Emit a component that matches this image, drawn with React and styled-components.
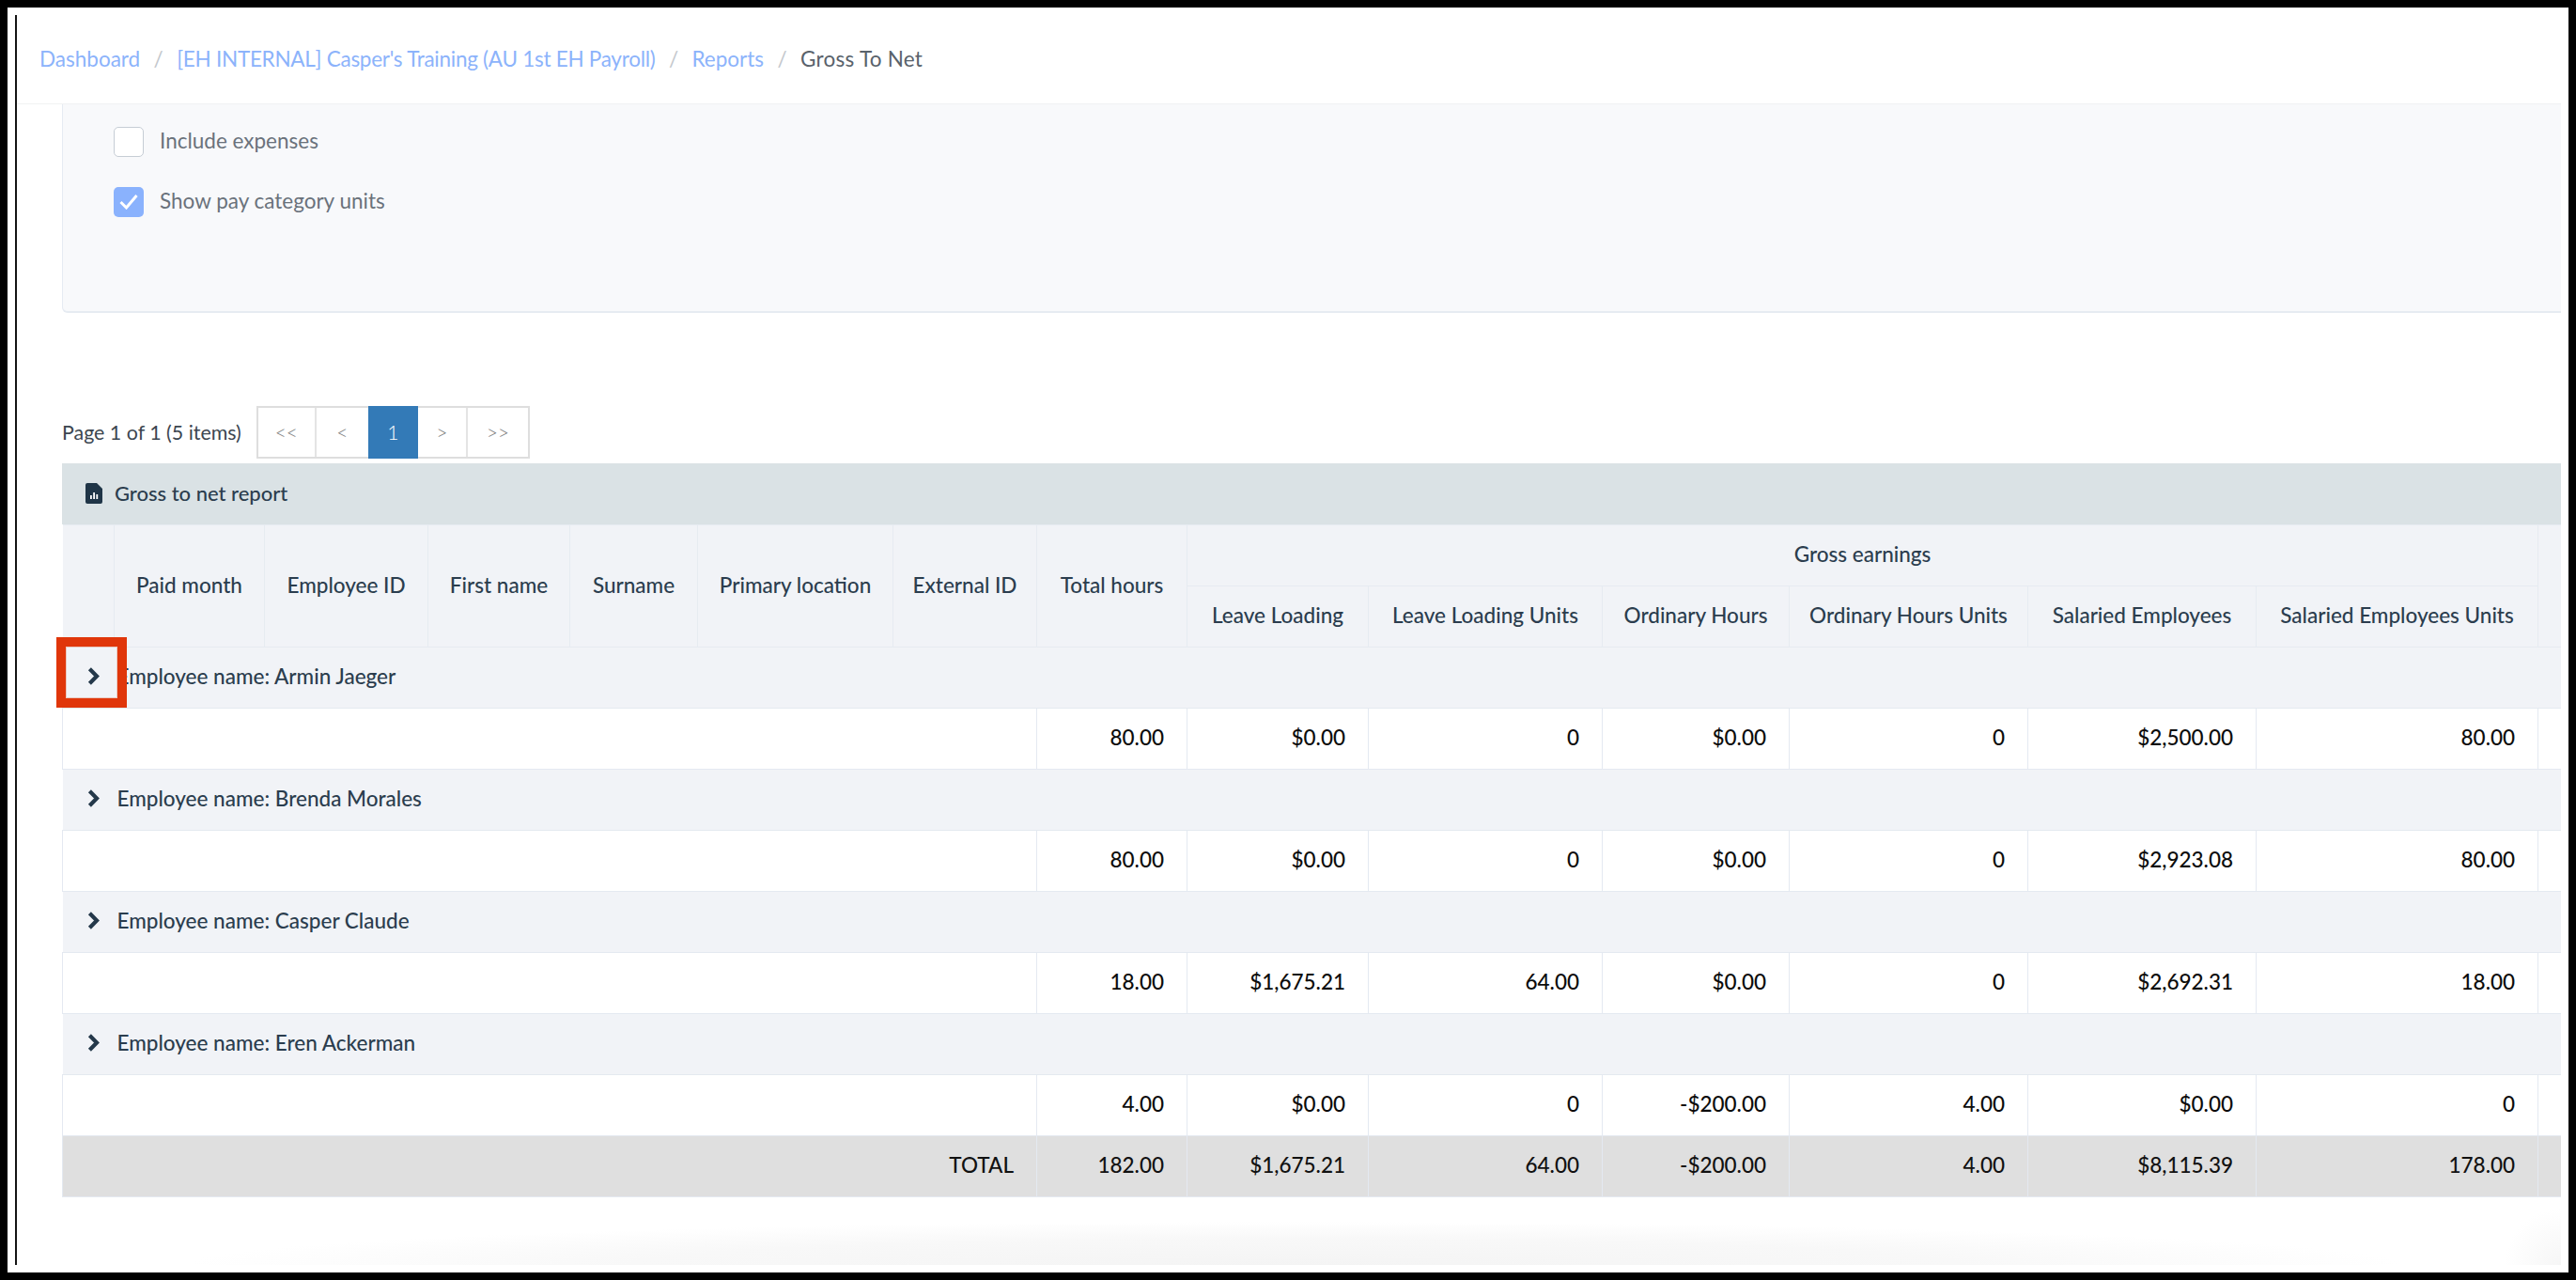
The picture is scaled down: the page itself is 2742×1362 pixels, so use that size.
import React from "react";
import styled, { createGlobalStyle } from "styled-components";

const Global = createGlobalStyle`
  html, body { margin: 0; padding: 0; background: #000; }
  * { box-sizing: border-box; }
  body { font-family: Lato, "Liberation Sans", sans-serif; }
`;

const Frame = styled.div`
  width: 2742px;
  height: 1362px;
  padding: 8px;
  background: #000;
  overflow: hidden;
`;
const Screen = styled.div`
  height: 100%;
  background: #fff;
  padding: 8px;
`;
const Viewport = styled.div`
  position: relative;
  height: 100%;
  border-left: 2px solid #141414;
  overflow: hidden;
  display: flex;
  flex-direction: column;
`;
const ScrollThumb = styled.div`
  position: absolute;
  left: -2px;
  top: 325px;
  width: 2px;
  height: 75px;
  background: #4c4c4c;
`;
const Breadcrumbs = styled.nav`
  flex: none;
  height: 95px;
  padding: 0 0 2px 24px;
  display: flex;
  align-items: center;
  font-size: 22.5px;
  border-bottom: 1px solid #f1f2f3;
`;
const Crumb = styled.span`
  color: ${(p) => (p.$current ? "#59626b" : "#8cb3fb")};
  letter-spacing: ${(p) => p.$track || 0}px;
`;
const Sep = styled.span`
  color: #c4c8cd;
  width: 39px;
  text-align: center;
`;
const Body = styled.main`
  flex: 1;
  padding-left: 48px;
  display: flex;
  flex-direction: column;
`;
const Panel = styled.section`
  height: 222px;
  padding: 24px 0 0 54px;
  background: #f8f9fb;
  border: 1px solid #e6ebf2;
  border-width: 0 0 2px 1px;
  border-bottom-left-radius: 6px;
  display: flex;
  flex-direction: column;
  gap: 32px;
`;
const CheckRow = styled.label`
  display: flex;
  align-items: center;
  gap: 17px;
  font-size: 22.5px;
  color: #6a727b;
  height: 32px;
`;
const CheckText = styled.span`
  margin-top: -3px;
`;
const Box = styled.span`
  width: 32px;
  height: 32px;
  border-radius: 5px;
  display: flex;
  align-items: center;
  justify-content: center;
  background: ${(p) => (p.$on ? "#8ab2fd" : "#fff")};
  border: ${(p) => (p.$on ? "none" : "1.5px solid #c6cdd5")};
`;
const Pager = styled.div`
  margin-top: 99px;
  height: 56px;
  display: flex;
  align-items: center;
  gap: 16px;
  font-size: 21.4px;
  color: #3c4650;
`;
const PagerLabel = styled.span`
  margin-top: -1px;
`;
const PagerGroup = styled.div`
  display: flex;
  height: 56px;
  border: 2px solid #dedede;
`;
const PageBtn = styled.span`
  width: ${(p) => p.$w}px;
  display: flex;
  align-items: center;
  justify-content: center;
  padding-bottom: 2px;
  font-size: 21px;
  font-weight: 300;
  color: ${(p) => (p.$active ? "#fff" : "#7d7d7d")};
  background: ${(p) => (p.$active ? "#337ab7" : "#fff")};
  margin: ${(p) => (p.$active ? "-2px 0" : "0")};
  border-right: ${(p) => (p.$line ? "2px solid #e4e4e4" : "none")};
`;
const Report = styled.div`
  position: relative;
  margin-top: 5px;
  width: 2660px;
`;
const TitleBand = styled.div`
  height: 65px;
  background: #dae2e5;
  padding: 0 0 0 25px;
  display: flex;
  align-items: center;
  gap: 13px;
  font-size: 22px;
  font-weight: 500;
  color: #2b3d4e;
  svg { margin-top: -2px; }
`;
const TitleText = styled.span`
  margin-top: -3px;
`;
const Table = styled.table`
  width: 2660px;
  table-layout: fixed;
  border-collapse: collapse;
  font-size: 22.5px;
`;
const Th = styled.th`
  height: 65px;
  padding: 0 0 3px;
  font-weight: 500;
  font-size: 22.5px;
  text-align: center;
  white-space: nowrap;
  color: #2b3d4e;
  background: #f1f3f7;
  border: 1px solid #e6ebf1;
  &:first-child { border-left: none; }
`;
const CutTh = styled(Th)`
  text-align: left;
  padding-left: 24px;
  overflow: hidden;
  border-right: none;
`;
const GroupCell = styled.td`
  height: 65px;
  padding: 0 0 4px 26px;
  background: #f1f3f7;
  color: #2b3d4e;
  font-weight: 500;
  border: 1px solid #e4e9f0;
  border-width: 1px 0;
`;
const GroupInner = styled.div`
  display: flex;
  align-items: center;
  gap: 19px;
`;
const Td = styled.td`
  height: 65px;
  padding: 0 24px 3px;
  text-align: right;
  white-space: nowrap;
  font-weight: 500;
  color: ${(p) => (p.$total ? "#111" : "#0c0c0c")};
  background: ${(p) => (p.$total ? "#dfdfdf" : "#fff")};
  border: 1px solid #e4e9f1;
  &:last-child { border-right: none; padding: 0; }
`;
const Highlight = styled.div`
  position: absolute;
  left: -6px;
  top: 185px;
  width: 75px;
  height: 75px;
  border: 10px solid #e0360a;
  box-shadow: inset 0 0 0 1px #e9c9c0;
`;
const Shade = styled.div`
  position: absolute;
  left: 0;
  right: 0;
  bottom: 0;
  height: 70px;
  pointer-events: none;
  background:
    radial-gradient(ellipse 1180px 46px at 1360px 100%, #f4f4f4 0%, #f8f8f8 60%, rgba(255,255,255,0) 100%),
    radial-gradient(ellipse 60px 60px at 100% 100%, #f6f6f6 0%, rgba(255,255,255,0) 100%);
`;

const widths = [55, 160, 174, 151, 136, 208, 153, 160, 193, 249, 199, 254, 243, 300, 25];

const rows = [
  { name: "Armin Jaeger", v: ["80.00", "$0.00", "0", "$0.00", "0", "$2,500.00", "80.00"] },
  { name: "Brenda Morales", v: ["80.00", "$0.00", "0", "$0.00", "0", "$2,923.08", "80.00"] },
  { name: "Casper Claude", v: ["18.00", "$1,675.21", "64.00", "$0.00", "0", "$2,692.31", "18.00"] },
  { name: "Eren Ackerman", v: ["4.00", "$0.00", "0", "-$200.00", "4.00", "$0.00", "0"] },
];
const totals = ["182.00", "$1,675.21", "64.00", "-$200.00", "4.00", "$8,115.39", "178.00"];

const Chevron = () => (
  <svg width="13" height="19" viewBox="0 0 13 19" fill="none">
    <path d="M2.4 1.8 L10 9.5 L2.4 17.2" stroke="#24384a" strokeWidth="4.2" />
  </svg>
);
const Check = () => (
  <svg width="20" height="16" viewBox="0 0 20 16" fill="none">
    <path d="M1.5 8 L7.5 14 L18.5 1" stroke="#fff" strokeWidth="3" />
  </svg>
);
const ReportIcon = () => (
  <svg width="18" height="22" viewBox="0 0 18 22">
    <path d="M2 0 H12 L18 6 V20 a2 2 0 0 1 -2 2 H2 a2 2 0 0 1 -2 -2 V2 a2 2 0 0 1 2 -2 Z" fill="#1f3547" />
    <rect x="5" y="13" width="1.8" height="4" fill="#fff" />
    <rect x="8.2" y="10" width="1.8" height="7" fill="#fff" />
    <rect x="11.4" y="12" width="1.8" height="5" fill="#fff" />
  </svg>
);

export default function App() {
  return (
    <>
      <Global />
      <Frame>
        <Screen>
          <Viewport>
            <ScrollThumb />
            <Breadcrumbs>
              <Crumb>Dashboard</Crumb>
              <Sep>/</Sep>
              <Crumb $track={-0.27}>[EH INTERNAL] Casper's Training (AU 1st EH Payroll)</Crumb>
              <Sep>/</Sep>
              <Crumb>Reports</Crumb>
              <Sep>/</Sep>
              <Crumb $current $track={0.25}>Gross To Net</Crumb>
            </Breadcrumbs>
            <Body>
              <Panel>
                <CheckRow>
                  <Box />
                  <CheckText>Include expenses</CheckText>
                </CheckRow>
                <CheckRow>
                  <Box $on>
                    <Check />
                  </Box>
                  <CheckText>Show pay category units</CheckText>
                </CheckRow>
              </Panel>
              <Pager>
                <PagerLabel>Page 1 of 1 (5 items)</PagerLabel>
                <PagerGroup>
                  <PageBtn $w={62} $line>&lt;&lt;</PageBtn>
                  <PageBtn $w={55}>&lt;</PageBtn>
                  <PageBtn $w={53} $active>1</PageBtn>
                  <PageBtn $w={53} $line>&gt;</PageBtn>
                  <PageBtn $w={64}>&gt;&gt;</PageBtn>
                </PagerGroup>
              </Pager>
              <Report>
                <TitleBand>
                  <ReportIcon />
                  <TitleText>Gross to net report</TitleText>
                </TitleBand>
                <Table>
                  <colgroup>
                    {widths.map((w, i) => (
                      <col key={i} style={{ width: w }} />
                    ))}
                  </colgroup>
                  <thead>
                    <tr>
                      <Th rowSpan={2} />
                      <Th rowSpan={2}>Paid month</Th>
                      <Th rowSpan={2}>Employee ID</Th>
                      <Th rowSpan={2}>First name</Th>
                      <Th rowSpan={2}>Surname</Th>
                      <Th rowSpan={2}>Primary location</Th>
                      <Th rowSpan={2}>External ID</Th>
                      <Th rowSpan={2}>Total hours</Th>
                      <Th colSpan={6}>Gross earnings</Th>
                      <CutTh rowSpan={2}>Total</CutTh>
                    </tr>
                    <tr>
                      <Th>Leave Loading</Th>
                      <Th>Leave Loading Units</Th>
                      <Th>Ordinary Hours</Th>
                      <Th>Ordinary Hours Units</Th>
                      <Th>Salaried Employees</Th>
                      <Th>Salaried Employees Units</Th>
                    </tr>
                  </thead>
                  <tbody>
                    {rows.map((r) => (
                      <React.Fragment key={r.name}>
                        <tr>
                          <GroupCell colSpan={15}>
                            <GroupInner>
                              <Chevron />
                              <span>Employee name: {r.name}</span>
                            </GroupInner>
                          </GroupCell>
                        </tr>
                        <tr>
                          <Td colSpan={7} />
                          {r.v.map((v, i) => (
                            <Td key={i}>{v}</Td>
                          ))}
                          <Td />
                        </tr>
                      </React.Fragment>
                    ))}
                    <tr>
                      <Td $total colSpan={7}>TOTAL</Td>
                      {totals.map((v, i) => (
                        <Td $total key={i}>{v}</Td>
                      ))}
                      <Td $total />
                    </tr>
                  </tbody>
                </Table>
                <Highlight />
              </Report>
            </Body>
            <Shade />
          </Viewport>
        </Screen>
      </Frame>
    </>
  );
}
